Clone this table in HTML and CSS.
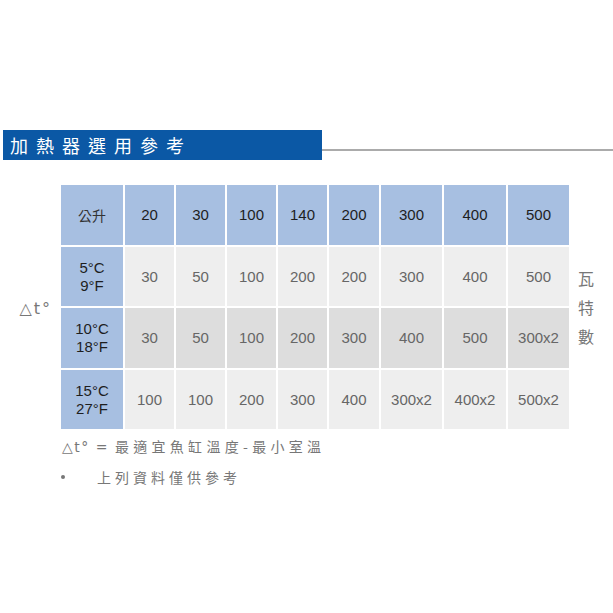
FILE: index.html
```html
<!DOCTYPE html>
<html lang="zh-Hant">
<head>
<meta charset="utf-8">
<title>加熱器選用參考</title>
<link rel="stylesheet" href="styles.css">
</head>
<body>
<section class="page">
  <div class="title-row">
    <h1 class="title">加熱器選用參考</h1>
    <div class="rule"></div>
  </div>
  <div class="chart">
    <div class="side-left">△t°</div>
    <div class="grid">
      <div class="c head">公升</div>
      <div class="c head">20</div>
      <div class="c head">30</div>
      <div class="c head">100</div>
      <div class="c head">140</div>
      <div class="c head">200</div>
      <div class="c head">300</div>
      <div class="c head">400</div>
      <div class="c head">500</div>

      <div class="c head lbl">5°C<br>9°F</div>
      <div class="c light">30</div>
      <div class="c light">50</div>
      <div class="c light">100</div>
      <div class="c light">200</div>
      <div class="c light">200</div>
      <div class="c light">300</div>
      <div class="c light">400</div>
      <div class="c light">500</div>

      <div class="c head lbl">10°C<br>18°F</div>
      <div class="c dark">30</div>
      <div class="c dark">50</div>
      <div class="c dark">100</div>
      <div class="c dark">200</div>
      <div class="c dark">300</div>
      <div class="c dark">400</div>
      <div class="c dark">500</div>
      <div class="c dark">300x2</div>

      <div class="c head lbl">15°C<br>27°F</div>
      <div class="c light">100</div>
      <div class="c light">100</div>
      <div class="c light">200</div>
      <div class="c light">300</div>
      <div class="c light">400</div>
      <div class="c light">300x2</div>
      <div class="c light">400x2</div>
      <div class="c light">500x2</div>
    </div>
    <div class="side-right">瓦<br>特<br>數</div>
  </div>
  <p class="note"><span class="note-sym">△t° = </span>最適宜魚缸溫度-最小室溫</p>
  <ul class="list">
    <li>上列資料僅供參考</li>
  </ul>
</section>
</body>
</html>
```

FILE: styles.css
```css
html, body {
  margin: 0;
  padding: 0;
  background: #ffffff;
}

.page {
  padding-top: 130px;
  font-family: "Liberation Sans", "Noto Sans CJK TC", sans-serif;
}

.title-row {
  display: flex;
  align-items: flex-start;
}

.title {
  margin: 0 0 0 3px;
  width: 319px;
  height: 30px;
  box-sizing: border-box;
  padding-left: 7px;
  background: #0b58a5;
  color: #ffffff;
  font-family: "Noto Sans CJK TC", sans-serif;
  font-weight: normal;
  font-size: 18px;
  line-height: 30px;
  letter-spacing: 8px;
  white-space: nowrap;
}

.rule {
  flex: 1;
  height: 2px;
  margin-top: 19px;
  background: #ababab;
}

.chart {
  display: flex;
  align-items: center;
  margin-top: 25px;
}

.side-left {
  width: 52px;
  padding-right: 9px;
  padding-top: 2px;
  text-align: right;
  font-family: "DejaVu Sans", sans-serif;
  font-size: 16px;
  letter-spacing: 2px;
  color: #777777;
}

.grid {
  display: grid;
  grid-template-columns: 62px 49px 49px 49px 49px 50px 61px 62px 61px;
  grid-template-rows: 60px 59px 60px 59px;
  gap: 2px;
}

.c {
  display: flex;
  align-items: center;
  justify-content: center;
  text-align: center;
  font-size: 15px;
  line-height: 18px;
  color: #666666;
}

.head {
  background: #a7bfe1;
  color: #1e1e1e;
}

.head:first-child {
  font-family: "Noto Sans CJK TC", sans-serif;
  font-size: 14px;
  color: #333333;
}

.light {
  background: #eeeeee;
}

.dark {
  background: #dddddd;
}

.side-right {
  margin-left: 9px;
  font-family: "Noto Sans CJK TC", sans-serif;
  font-size: 16px;
  line-height: 29px;
  color: #777777;
}

.note {
  margin: 7px 0 0 62px;
  font-family: "Noto Sans CJK TC", sans-serif;
  font-size: 14px;
  line-height: 20px;
  letter-spacing: 4.3px;
  color: #777777;
}

.note-sym {
  font-family: "DejaVu Sans", sans-serif;
  letter-spacing: 1.5px;
}

.list {
  list-style: none;
  margin: 10px 0 0 0;
  padding: 0 0 0 97px;
  font-family: "Noto Sans CJK TC", sans-serif;
  font-size: 14px;
  line-height: 20px;
  letter-spacing: 4px;
  color: #777777;
}

.list li {
  position: relative;
}

.list li::before {
  content: "";
  position: absolute;
  left: -36px;
  top: 8px;
  width: 4px;
  height: 4px;
  border-radius: 50%;
  background: #777777;
}
```
